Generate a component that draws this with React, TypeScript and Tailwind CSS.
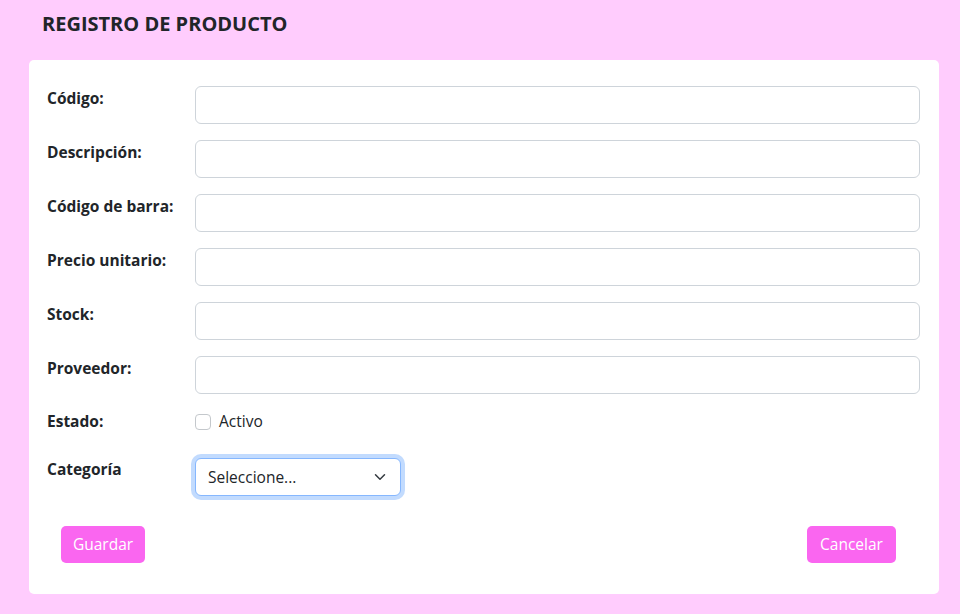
import React from 'react'

const campos = ['Código:', 'Descripción:', 'Código de barra:', 'Precio unitario:', 'Stock:', 'Proveedor:']

export default function App() {
  return (
    <div className="min-h-[614px] w-[960px] bg-[#ffccfd] pl-[29px] pr-[21px] pt-[10px] pb-[21px] text-[#212529] font-['Open_Sans',sans-serif]">
      <h1 className="ml-[13px] text-[20px] font-bold leading-[27px]">REGISTRO DE PRODUCTO</h1>
      <div className="mt-[23px] rounded-[5px] bg-white pt-[26px] pr-[19px] pb-[31px] pl-[18px]">
        {campos.map((c) => (
          <div key={c} className="mb-[16px] flex items-start">
            <label className="w-[148px] pt-[2px] text-[15.5px] font-bold leading-[21px]">{c}</label>
            <input className="h-[38px] flex-1 rounded-[6px] border border-[#ced4da] bg-white px-3 outline-none" />
          </div>
        ))}
        <div className="mb-[26px] flex items-center">
          <label className="w-[148px] text-[15.5px] font-bold leading-[21px]">Estado:</label>
          <label className="flex items-center gap-[8px] text-[15.5px]">
            <span className="h-[16px] w-[16px] rounded-[4px] border border-[#c4c8cc] bg-white" />
            Activo
          </label>
        </div>
        <div className="flex items-start">
          <label className="w-[148px] text-[15.5px] font-bold leading-[21px]">Categoría</label>
          <div className="-mt-[1px] flex h-[38px] w-[206px] items-center justify-between rounded-[6px] border border-[#86b7fe] bg-white pl-[12px] pr-[14px] text-[15.5px] shadow-[0_0_0_4px_rgba(13,110,253,0.25)]">
            <span>Seleccione...</span>
            <svg width="12" height="12" viewBox="0 0 16 16" fill="none" stroke="#343a40" strokeWidth="2" strokeLinecap="round" strokeLinejoin="round">
              <path d="m2 5 6 6 6-6" />
            </svg>
          </div>
        </div>
        <div className="mt-[30px] flex justify-between px-[14px]">
          <button className="h-[37px] w-[84px] rounded-[5px] bg-[#fa66f0] text-[15.5px] text-white">Guardar</button>
          <button className="mr-[10px] h-[37px] w-[89px] rounded-[5px] bg-[#fa66f0] text-[15.5px] text-white">Cancelar</button>
        </div>
      </div>
    </div>
  )
}
